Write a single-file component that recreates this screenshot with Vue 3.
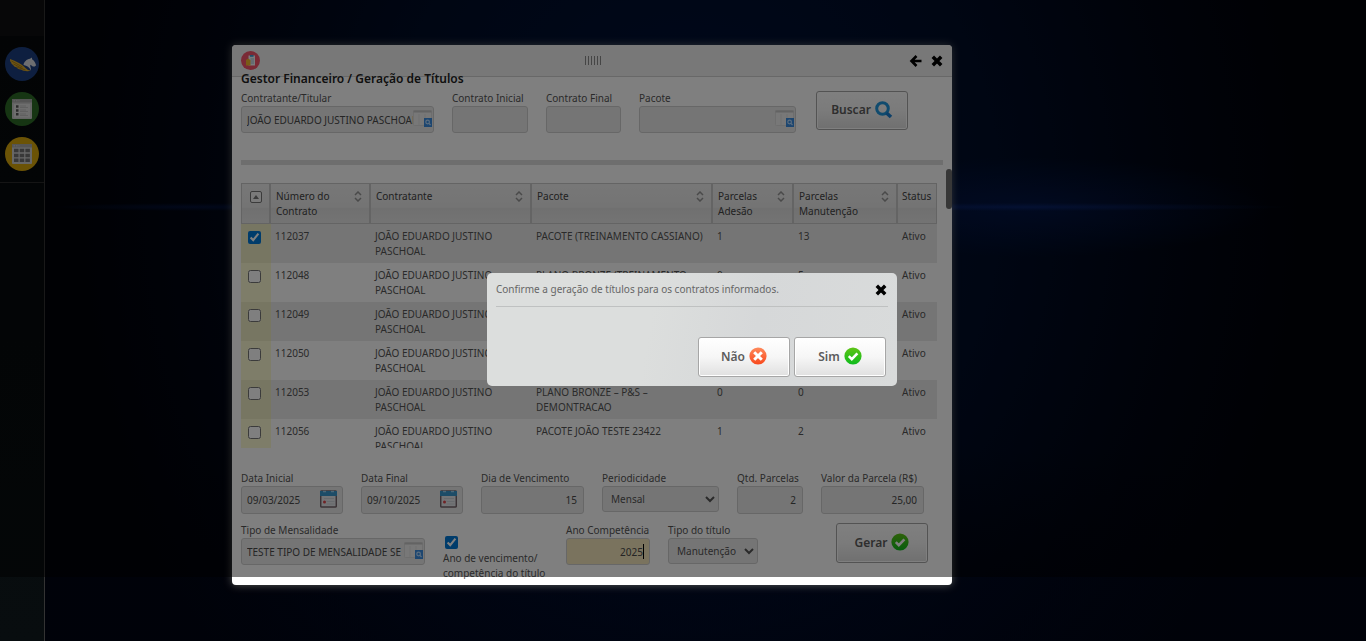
<script setup>
import { ref } from 'vue'

const columns = [
  { key: 'numero', label: 'Número do Contrato', sortable: true },
  { key: 'contratante', label: 'Contratante', sortable: true },
  { key: 'pacote', label: 'Pacote', sortable: true },
  { key: 'adesao', label: 'Parcelas Adesão', sortable: true },
  { key: 'manutencao', label: 'Parcelas Manutenção', sortable: true },
  { key: 'status', label: 'Status', sortable: false }
]

const nome = 'JOÃO EDUARDO JUSTINO PASCHOAL'
const rows = ref([
  { numero: '112037', contratante: nome, pacote: 'PACOTE (TREINAMENTO CASSIANO)', adesao: 1, manutencao: 13, status: 'Ativo', checked: true },
  { numero: '112048', contratante: nome, pacote: 'PLANO BRONZE (TREINAMENTO', adesao: 0, manutencao: 5, status: 'Ativo', checked: false },
  { numero: '112049', contratante: nome, pacote: '', adesao: '', manutencao: '', status: 'Ativo', checked: false },
  { numero: '112050', contratante: nome, pacote: '', adesao: '', manutencao: '', status: 'Ativo', checked: false },
  { numero: '112053', contratante: nome, pacote: 'PLANO BRONZE – P&S – DEMONTRACAO', adesao: 0, manutencao: 0, status: 'Ativo', checked: false },
  { numero: '112056', contratante: nome, pacote: 'PACOTE JOÃO TESTE 23422', adesao: 1, manutencao: 2, status: 'Ativo', checked: false }
])

const contratante = ref('JOÃO EDUARDO JUSTINO PASCHOAL')
const dataInicial = ref('09/03/2025')
const dataFinal = ref('09/10/2025')
const dia = ref('15')
const parcelas = ref('2')
const valor = ref('25,00')
const tipo = ref('TESTE TIPO DE MENSALIDADE SE')
const ano = ref('2025')
const anoVencimento = ref(true)
</script>

<template>
  <div class="desktop">
    <svg width="0" height="0" class="defs" aria-hidden="true">
      <defs>
        <linearGradient id="g-ok" x1="0" y1="0" x2="0" y2="1">
          <stop offset="0" stop-color="#5fc416" />
          <stop offset="1" stop-color="#0dbb1c" />
        </linearGradient>
        <linearGradient id="g-no" x1="0" y1="0" x2="0" y2="1">
          <stop offset="0" stop-color="#ff8a5c" />
          <stop offset="1" stop-color="#f8481c" />
        </linearGradient>
        <symbol id="i-ok" viewBox="0 0 18 18">
          <circle cx="9" cy="9" r="8.6" fill="url(#g-ok)" />
          <path d="M4.8 9.2l3 3 5.6-5.8" fill="none" stroke="#fff" stroke-width="2.6" />
        </symbol>
        <symbol id="i-no" viewBox="0 0 18 18">
          <circle cx="9" cy="9" r="8.6" fill="url(#g-no)" />
          <path d="M5.2 5.2l7.6 7.6M12.8 5.2l-7.6 7.6" stroke="#fff" stroke-width="3" />
        </symbol>
        <symbol id="i-x" viewBox="0 0 12 12">
          <path d="M1.800 1.800l8.400 8.400M10.200 1.800l-8.400 8.400" stroke="#000" stroke-width="3.500" />
        </symbol>
        <symbol id="i-lookup" viewBox="0 0 20 17">
          <rect x=".5" y=".5" width="18" height="15" rx="1" fill="#f0f0f0" stroke="#dcdcdc" />
          <path d="M.5 1.500h18" stroke="#c6c6c6" stroke-width="2" />
          <path d="M6 4v11M12 4v5" stroke="#e2e2e2" />
          <rect x="11" y="8" width="8" height="9" fill="#3b8de0" />
          <circle cx="14.600" cy="12" r="1.800" fill="none" stroke="#b9dcff" stroke-width="1.200" />
          <path d="M16 13.400l1.500 1.600" stroke="#b9dcff" stroke-width="1.200" />
        </symbol>
        <symbol id="i-cal" viewBox="0 0 17 18">
          <rect x=".7" y="1" width="15.600" height="16" rx="1" fill="#e6e8ec" stroke="#77666c" stroke-width="1.500" />
          <path d="M0 1h17v5H0z" fill="#3a98cf" />
          <path d="M3 1.500h3M11 1.500h3" stroke="#9bd2f2" stroke-width="1.500" />
          <path d="M4 8.500h10M6.500 11.500h8M6.500 14h8" stroke="#cfd4da" />
          <circle cx="4.500" cy="12" r="1.500" fill="#e0454b" />
        </symbol>
      </defs>
    </svg>

    <nav class="sidebar" aria-label="Aplicativos">
      <button class="app blue" aria-label="Pegasus">
        <svg viewBox="0 0 34 34">
          <path d="M5 12c3 1 6 2.500 9 4 3 1.500 5 3.500 6.500 5l2.500 2 3 .800c-4 .800-8 .200-10-1.300-2 .200-4-1-4.500-2.200-1.500 0-3-1.200-3.300-2.300-1.200-.3-2-1.500-2-2.500C5.400 15 4.800 13.500 5 12z" fill="#dba82a" />
          <path d="M6.500 14l11 6M8.500 17l9 4.500M11.500 20l9 3" stroke="#94700f" stroke-width=".7" />
          <path d="M18.500 18c.5-3 3-5.800 6.500-6.200l1.800-1.300.4 2c1.800.8 2.800 2.600 3.900 5.700l-1.300 1.400-2-.2-2.300-1.600c-1 1.200.8 3.200.5 5.700-1.500-3-3.800-5-7.500-5.500z" fill="#dadde2" />
        </svg>
      </button>
      <button class="app green" aria-label="Lista">
        <svg viewBox="0 0 34 34">
          <rect x="7" y="7" width="20" height="20" rx="1" fill="#c9c9c9" />
          <path d="M7 7h20v3.500H7z" fill="#a9a9a9" />
          <path d="M8.500 8.800h6" stroke="#ccc" stroke-dasharray="1.500 1" />
          <path d="M9 12h16v13.500H9z" fill="#dcdcdc" />
          <path d="M11 14.500h2.500M11 18.500h2.500M11 22.300h2.500" stroke="#555" stroke-width="2.500" />
          <path d="M15 14h6M15 15.500h8M15 18h6M15 19.500h8M15 22h6M15 23.500h8" stroke="#bdbdbd" stroke-width=".9" />
        </svg>
      </button>
      <button class="app gold" aria-label="Agenda">
        <svg viewBox="0 0 34 34">
          <rect x="7" y="7" width="20" height="20" rx="1" fill="#cfcfcf" />
          <path d="M7 7h20v3.500H7z" fill="#a9a9a9" />
          <path d="M8.500 8.800h6" stroke="#ccc" stroke-dasharray="1.500 1" />
          <path d="M9 13.500h16M9 18.500h16M9 23.300h16" stroke="#707070" stroke-width="3.600" stroke-dasharray="4.500 1.200" />
        </svg>
      </button>
    </nav>

    <main class="window">
      <header class="titlebar">
        <svg class="logo" viewBox="0 0 19 19" aria-hidden="true">
          <circle cx="9.500" cy="9.500" r="9.500" fill="#f4546a" />
          <path d="M7.500 4.500h6.500v10H7.500z" fill="#f4f6f8" />
          <path d="M9 4h3.500v1.800H9z" fill="#3b9fd8" />
          <path d="M9.500 8h3.500M9.500 10h3.500M9.500 12h3.500" stroke="#8fb4cc" stroke-width=".8" />
          <path d="M5 9l2-1.500 2.500 1.500v5.500H5z" fill="#f3b62c" />
        </svg>
        <span class="grip"></span>
        <div class="tools">
          <button class="plain" aria-label="Voltar">
            <svg width="13" height="12" viewBox="0 0 13 12"><path d="M12.500 6H3M7.500 1L2.500 6l5 5" fill="none" stroke="#000" stroke-width="2.600" /></svg>
          </button>
          <button class="plain" aria-label="Fechar janela">
            <svg width="12" height="12"><use href="#i-x" /></svg>
          </button>
        </div>
      </header>

      <div class="content">
        <h1>Gestor Financeiro / Geração de Títulos</h1>

        <div class="fields">
          <div class="field w193">
            <label for="contratante">Contratante/Titular</label>
            <div class="box">
              <input id="contratante" v-model="contratante" class="lookup" type="text">
              <svg class="inner" width="20" height="17"><use href="#i-lookup" /></svg>
            </div>
          </div>
          <div class="field w76">
            <label for="cinicial">Contrato Inicial</label>
            <input id="cinicial" type="text">
          </div>
          <div class="field w75">
            <label for="cfinal">Contrato Final</label>
            <input id="cfinal" type="text">
          </div>
          <div class="field w157">
            <label for="pacote">Pacote</label>
            <div class="box">
              <input id="pacote" class="lookup" type="text">
              <svg class="inner" width="20" height="17"><use href="#i-lookup" /></svg>
            </div>
          </div>
          <button class="btn search">
            Buscar
            <svg width="18" height="18" viewBox="0 0 18 18"><circle cx="7.500" cy="7.500" r="5.800" fill="none" stroke="#2196dc" stroke-width="3" /><path d="M11.500 12l4.500 4" stroke="#1b7fd0" stroke-width="3.600" /></svg>
          </button>
        </div>

        <hr class="bar">

        <div class="grid">
          <table>
            <colgroup>
              <col class="c0"><col class="c1"><col class="c2"><col class="c3"><col class="c4"><col class="c5"><col class="c6">
            </colgroup>
            <thead>
              <tr>
                <th class="pick">
                  <button class="toggle" aria-label="Selecionar todos"><svg width="6" height="4" viewBox="0 0 6 4"><path d="M0 4l3-4 3 4z" fill="#777" /></svg></button>
                </th>
                <th v-for="c in columns" :key="c.key">
                  <div class="th">
                    <span>{{ c.label }}</span>
                    <svg v-if="c.sortable" width="8" height="11" viewBox="0 0 8 11"><path d="M1 4l3-3 3 3M1 7l3 3 3-3" fill="none" stroke="#959595" stroke-width="1.500" /></svg>
                  </div>
                </th>
              </tr>
            </thead>
            <tbody>
              <tr v-for="r in rows" :key="r.numero">
                <td class="pick"><input v-model="r.checked" type="checkbox" :aria-label="r.numero"></td>
                <td>{{ r.numero }}</td>
                <td>{{ r.contratante }}</td>
                <td>{{ r.pacote }}</td>
                <td>{{ r.adesao }}</td>
                <td>{{ r.manutencao }}</td>
                <td>{{ r.status }}</td>
              </tr>
            </tbody>
          </table>
        </div>

        <div class="fields tall">
          <div class="field w102">
            <label for="dini">Data Inicial</label>
            <div class="box">
              <input id="dini" v-model="dataInicial" type="text">
              <svg class="inner cal" width="17" height="18"><use href="#i-cal" /></svg>
            </div>
          </div>
          <div class="field w102">
            <label for="dfim">Data Final</label>
            <div class="box">
              <input id="dfim" v-model="dataFinal" type="text">
              <svg class="inner cal" width="17" height="18"><use href="#i-cal" /></svg>
            </div>
          </div>
          <div class="field w103">
            <label for="dia">Dia de Vencimento</label>
            <input id="dia" v-model="dia" class="num" type="text">
          </div>
          <div class="field w117">
            <label for="per">Periodicidade</label>
            <select id="per"><option>Mensal</option></select>
          </div>
          <div class="field w66">
            <label for="qtd">Qtd. Parcelas</label>
            <input id="qtd" v-model="parcelas" class="num" type="text">
          </div>
          <div class="field w103">
            <label for="valor">Valor da Parcela (R$)</label>
            <input id="valor" v-model="valor" class="num" type="text">
          </div>
        </div>

        <div class="fields last">
          <div class="field w184">
            <label for="tipo">Tipo de Mensalidade</label>
            <div class="box">
              <input id="tipo" v-model="tipo" class="lookup" type="text">
              <svg class="inner" width="20" height="17"><use href="#i-lookup" /></svg>
            </div>
          </div>
          <div class="field check">
            <input id="venc" v-model="anoVencimento" type="checkbox">
            <label for="venc">Ano de vencimento/<br>competência do título</label>
          </div>
          <div class="field w84">
            <label for="ano">Ano Competência</label>
            <div class="box">
              <input id="ano" v-model="ano" class="num active" type="text">
              <span class="caret"></span>
            </div>
          </div>
          <div class="field w90">
            <label for="titulo">Tipo do título</label>
            <select id="titulo"><option>Manutenção</option></select>
          </div>
          <button class="btn generate">
            Gerar
            <svg width="18" height="18"><use href="#i-ok" /></svg>
          </button>
        </div>
      </div>
      <span class="thumb"></span>
    </main>

    <div class="overlay"></div>

    <section class="dialog" role="dialog" aria-labelledby="msg">
      <div class="message">
        <p id="msg">Confirme a geração de títulos para os contratos informados.</p>
        <button class="plain" aria-label="Fechar"><svg width="12" height="12"><use href="#i-x" /></svg></button>
      </div>
      <div class="actions">
        <button class="btn">Não <svg width="18" height="18"><use href="#i-no" /></svg></button>
        <button class="btn">Sim <svg width="18" height="18"><use href="#i-ok" /></svg></button>
      </div>
    </section>
  </div>
</template>

<style>
html, body { background: #00030c; }
</style>

<style scoped>
.desktop {
  position: relative;
  display: flex;
  min-height: 100vh;
  overflow: hidden;
  font: 10px/15px "Noto Sans", "Open Sans", sans-serif;
  color: #555;
  background:
    radial-gradient(ellipse 260px 4px at 1030px 207px, rgba(20, 60, 170, .35), transparent),
    radial-gradient(ellipse 240px 50px at 1030px 207px, rgba(8, 34, 110, .4), transparent),
    radial-gradient(ellipse 140px 4px at 190px 207px, rgba(10, 35, 110, .4), transparent),
    linear-gradient(transparent 70%, rgba(0, 2, 10, .6) 90%),
    radial-gradient(ellipse 620px 700px at 690px 200px, #00123a, #000c26 50%, #000512 80%, #000208);
}
.desktop *, .desktop *::before { box-sizing: border-box; }
.defs { position: absolute; }
button, input, select { font: inherit; color: inherit; margin: 0; }

.sidebar {
  display: flex;
  flex-direction: column;
  gap: 11px;
  width: 45px;
  padding: 47px 5px 0;
  border-right: 1px solid #333;
  background: linear-gradient(#0e0f10 36px, #06090b 36px, #080d0f);
}
.sidebar::after {
  content: "";
  height: 1px;
  margin: 0 -5px;
  background: #2a2a2a;
}
.app {
  width: 34px;
  height: 34px;
  padding: 0;
  border: 0;
  border-radius: 50%;
}
.app svg { display: block; width: 34px; height: 34px; }
.blue { background: #1d3f80; }
.green { background: #2c6a26; }
.gold { background: #d6a60c; }

.window {
  position: absolute;
  left: 232px;
  top: 45px;
  width: 720px;
  height: 540px;
  border-radius: 4px;
  background: #fff;
  box-shadow: 0 0 8px rgba(190, 190, 170, .45);
}
.titlebar {
  display: flex;
  align-items: center;
  justify-content: space-between;
  height: 32px;
  padding: 0 9px;
  border-bottom: 1px solid #d0d0d0;
  border-radius: 4px 4px 0 0;
  background: #f1f1f1;
}
.logo { width: 19px; height: 19px; }
.grip {
  width: 16px;
  height: 9px;
  margin-left: 17px;
  background: repeating-linear-gradient(90deg, #8a8a8a 0 1px, transparent 1px 3px);
}
.tools { display: flex; gap: 9px; }
.plain { display: flex; padding: 0; border: 0; background: none; }

.content { height: 508px; padding: 0 9px; overflow: hidden; margin-top: -6px; }
h1 { margin: 0 0 4px; font-size: 12px; line-height: 16px; font-weight: 600; color: #222; }
.fields { display: flex; align-items: flex-start; gap: 18px; }
.field { display: flex; flex-direction: column; flex: none; }
.field label { height: 15px; white-space: nowrap; }
.box { position: relative; display: flex; }
.field input[type="text"] {
  width: 100%;
  height: 27px;
  padding: 0 6px 0 5px;
  border: 1px solid #cfcfcf;
  border-radius: 3px;
  outline: 0;
  background: #ebebeb;
  color: #4a4a4a;
}
.field input.lookup { padding-right: 20px; }
.tall .field input[type="text"] { height: 28px; }
.field input.num { text-align: right; }
.field input.active { background: #f5e7bd; }
.inner { position: absolute; right: 1px; top: 4px; }
.inner.cal { right: 6px; top: 4px; }
.caret { position: absolute; right: 6px; top: 6px; width: 1px; height: 15px; background: #000; }
select {
  width: 100%;
  height: 26px;
  padding: 0 4px;
  border: 1px solid #cfcfcf;
  border-radius: 3px;
  background: #ebebeb;
}
.w193 { width: 193px; }
.w76 { width: 76px; }
.w75 { width: 75px; }
.w157 { width: 157px; }
.w102 { width: 102px; }
.w103 { width: 103px; }
.w117 { width: 117px; }
.w66 { width: 66px; }
.w184 { width: 184px; }
.w84 { width: 84px; }
.w90 { width: 90px; }

input[type="checkbox"] { width: 13px; height: 13px; accent-color: #0078d7; }
.check { width: 105px; padding-top: 13px; }
.check input { margin: 0 0 2px 2px; }
.field.check label { height: 30px; }

.btn {
  display: flex;
  align-items: center;
  justify-content: center;
  gap: 4px;
  width: 92px;
  height: 40px;
  padding: 0 0 2px;
  border: 1px solid #a6a6a6;
  border-radius: 3px;
  box-shadow: inset 0 0 0 1px #fff;
  background: linear-gradient(#fff, #f6f6f6 50%, #e0e0e0);
  font-size: 12px;
  font-weight: 600;
  color: #5c5c5c;
}
.search { margin-left: 2px; height: 39px; }
.generate { margin: 0 15px 0 auto; }

.bar { height: 5px; margin: 27px 0 18px; border: 0; background: #dcdcdc; }

.grid { height: 265px; margin-bottom: 23px; overflow: hidden; }
table { width: 696px; border-collapse: separate; border-spacing: 0; table-layout: fixed; }
.c0 { width: 30px; }
.c1 { width: 100px; }
.c2 { width: 161px; }
.c3 { width: 181px; }
.c4 { width: 81px; }
.c5 { width: 104px; }
.c6 { width: 39px; }
th {
  padding: 5px 2px 4px 5px;
  border: 1px solid #c9c9c9;
  border-left-width: 0;
  border-right-width: 2px;
  background: linear-gradient(#efefef, #e8e8e8 60%, #e0e0e0 62%, #e8e8e8);
  font-weight: 400;
  text-align: left;
  vertical-align: top;
  color: #444;
}
th:last-child { border-right-width: 1px; padding-left: 4px; }
th.pick { border-left-width: 1px; padding: 7px 8px; }
.th { display: flex; justify-content: space-between; align-items: flex-start; }
.th svg { flex: none; margin: 2px 5px 0 0; }
.toggle {
  display: flex;
  align-items: center;
  justify-content: center;
  width: 12px;
  height: 12px;
  padding: 0;
  border: 1px solid #777;
  border-radius: 2px;
  background: #f4f4f4;
}
td { height: 39px; padding: 5px 5px 4px 4px; vertical-align: top; }
tbody tr { background: #fff; }
tbody tr:nth-child(odd) { background: #ebebeb; }
td.pick { padding: 7px 7px 0; background: #fdfbd2; line-height: 0; }
tbody tr:nth-child(odd) td.pick { background: #efecc4; }

.tall { margin-bottom: 9px; }

.thumb {
  position: absolute;
  right: 0;
  top: 124px;
  width: 6px;
  height: 40px;
  border-radius: 3px;
  background: #6e6e6e;
}

.overlay { position: absolute; inset: 0 0 10%; background: rgba(0, 0, 0, .5); }

.dialog {
  position: absolute;
  left: 487px;
  top: 273px;
  width: 410px;
  padding: 0 9px 9px;
  border-radius: 5px;
  background: linear-gradient(100deg, #dcdedd 40%, #d6d8d9 65%, #d9dbdb);
  color: #666;
}
.message {
  display: flex;
  align-items: center;
  justify-content: space-between;
  height: 34px;
  padding: 0 1px 0 0;
  border-bottom: 1px solid #bfc1c1;
}
.message p { margin: 0; }
.actions { display: flex; justify-content: flex-end; gap: 4px; padding: 30px 2px 0 0; }
</style>
